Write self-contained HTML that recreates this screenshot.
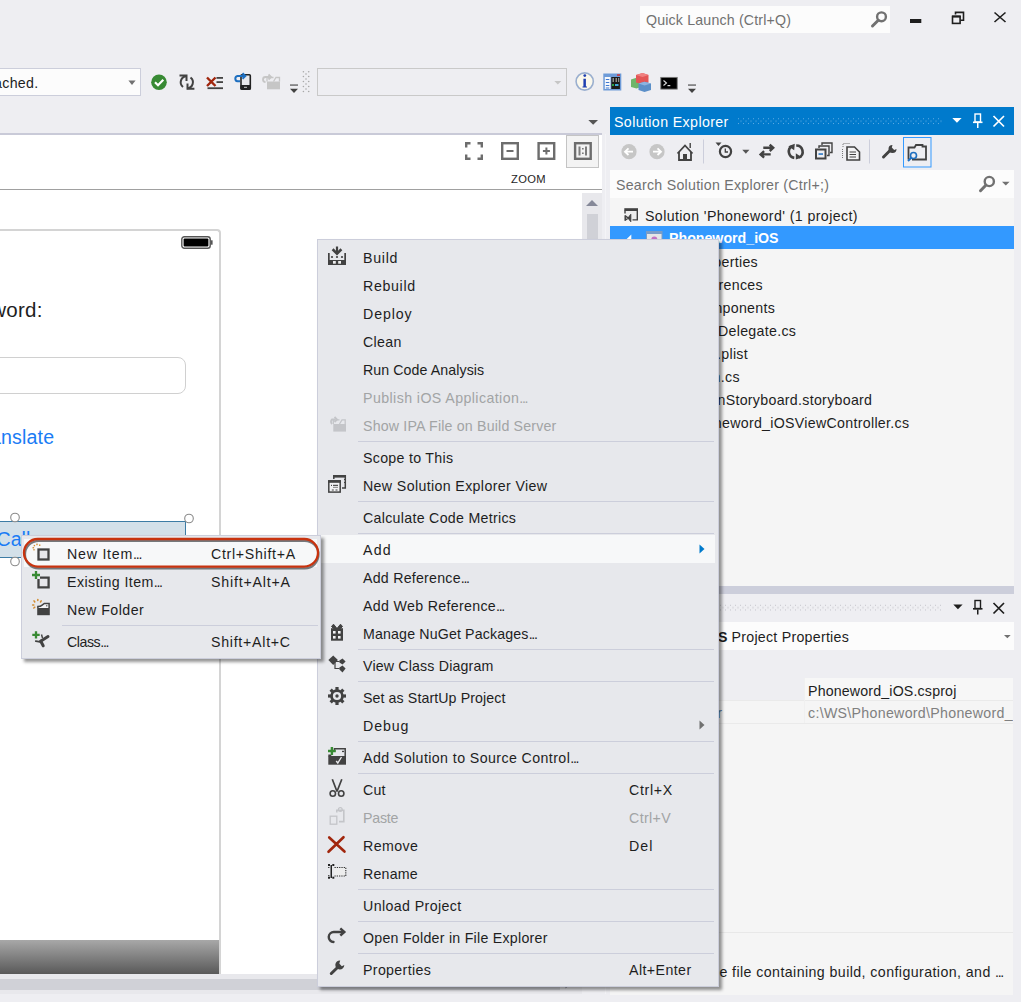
<!DOCTYPE html>
<html><head><meta charset="utf-8">
<style>
*{box-sizing:border-box}
html,body{margin:0;padding:0}
body{width:1021px;height:1002px;position:relative;overflow:hidden;background:#EEEEF2;font-family:"Liberation Sans",sans-serif;font-size:14.2px;color:#1E1E1E}
.a{position:absolute}
.t{position:absolute;white-space:nowrap;line-height:16px}
svg{position:absolute;overflow:visible}
/* menu */
.menu{position:absolute;background:#E7E8EC;border:1px solid #CCCEDB;box-shadow:3px 3px 3px rgba(0,0,0,0.42)}
.mi{position:absolute;left:0;right:0;height:28px}
.mi .l{position:absolute;left:45px;top:7px;line-height:16px;white-space:nowrap}
.mi .k{position:absolute;top:7px;line-height:16px;white-space:nowrap}
.sep{position:absolute;height:1px;background:#CCCEDB}
.dis{color:#A2A4A5}
.hl{position:absolute;left:2px;right:3px;height:28px;background:#F7F8F9}
</style></head><body>

<!-- Quick launch -->
<div class="a" style="left:640px;top:6px;width:250px;height:27px;background:#FCFCFC"></div>
<div class="t" style="left:646px;top:12px;color:#717171;letter-spacing:0.17px">Quick Launch (Ctrl+Q)</div>

<!-- toolbar dropdown 1 -->
<div class="a" style="left:-2px;top:68px;width:143px;height:28px;background:#FCFCFC;border:1px solid #CCCEDB"></div>
<div class="t" style="right:982.5px;top:75px;letter-spacing:0.3px">No devices attached.</div>
<!-- dropdown 2 -->
<div class="a" style="left:317px;top:68px;width:250px;height:28px;background:#EEEEF2;border:1px solid #C9C9C9"></div>

<!-- document well -->
<div class="a" style="left:0;top:135px;width:602px;height:839px;background:#FFFFFF"></div>
<div class="a" style="left:0;top:133px;width:602px;height:2px;background:#C9CAD8"></div>
<div class="a" style="left:0;top:189px;width:602px;height:1px;background:#A0A0A0"></div>
<div class="t" style="left:511px;top:171px;font-size:11.2px;letter-spacing:0.3px">ZOOM</div>

<!-- vertical scrollbar -->
<div class="a" style="left:582px;top:193px;width:20px;height:781px;background:#E8E8EC"></div>
<div class="a" style="left:587px;top:214px;width:11px;height:300px;background:#D0D1D7"></div>
<svg style="left:582px;top:193px" width="20" height="20"><path d="M4 13H16L10 7Z" fill="#868999"/></svg>
<!-- horizontal scrollbar -->
<div class="a" style="left:0;top:974px;width:582px;height:20px;background:#E8E8EC"></div>
<div class="a" style="left:0;top:979px;width:560px;height:11px;background:#D0D1D7"></div>
<svg style="left:560px;top:974px" width="50" height="20"><path d="M5.5 5.5L10.5 10L5.5 14.5Z" fill="#868999"/></svg>

<!-- phone frame -->
<div class="a" style="left:-20px;top:229px;width:241px;height:745px;border:2px solid #D4D4D4;border-bottom:none;border-radius:4px 4px 0 0;background:#fff"></div>
<div class="t" style="right:978.2px;top:298px;font-size:20.5px;line-height:24px;letter-spacing:0.3px">Enter a Phoneword:</div>
<div class="a" style="left:-20px;top:357px;width:206px;height:37px;border:1.5px solid #D0D0D0;border-radius:8px"></div>
<div class="t" style="right:966.8px;top:426px;font-size:19.6px;line-height:22px;color:#1A7CF5;letter-spacing:0.15px">Translate</div>
<div class="a" style="left:-10px;top:521px;width:196px;height:37px;background:#D3E0E9;border:1px solid #3D7CA5"></div>
<div class="t" style="left:-3.5px;top:528px;font-size:19.6px;line-height:22px;color:#1A7CF5">Call</div>
<div class="a" style="left:0;top:940px;width:219px;height:34px;background:linear-gradient(#A8A8A8,#595959)"></div>

<!-- Solution Explorer -->
<div class="a" style="left:610px;top:107px;width:404px;height:28px;background:#007ACC"></div>
<div class="t" style="left:614px;top:114px;color:#fff;letter-spacing:0.394px">Solution Explorer</div>
<div class="a" style="left:610px;top:170px;width:404px;height:28px;background:#FCFCFC"></div>
<div class="t" style="left:616px;top:177px;color:#717171;letter-spacing:0.259px">Search Solution Explorer (Ctrl+;)</div>
<div class="a" style="left:610px;top:198px;width:404px;height:388px;background:#F5F5F5"></div>
<div class="a" style="left:610px;top:226px;width:404px;height:23px;background:#3399FF"></div>
<div class="t" style="left:645px;top:208px;letter-spacing:0.397px">Solution 'Phoneword' (1 project)</div>
<div class="t" style="left:669px;top:230px;color:#fff;font-weight:bold">Phoneword_iOS</div>
<div class="t" style="right:263.0px;top:254px;letter-spacing:0.3px">Properties</div>
<div class="t" style="right:258.1px;top:277px;letter-spacing:0.3px">References</div>
<div class="t" style="right:245.9px;top:300px;letter-spacing:0.3px">Components</div>
<div class="t" style="right:224.8px;top:323px;letter-spacing:0.3px">AppDelegate.cs</div>
<div class="t" style="right:273.0px;top:346px;letter-spacing:0.3px">Info.plist</div>
<div class="t" style="right:281.2px;top:369px;letter-spacing:0.3px">Main.cs</div>
<div class="t" style="right:148.7px;top:392px;letter-spacing:0.3px">MainStoryboard.storyboard</div>
<div class="t" style="right:111.7px;top:415px;letter-spacing:0.3px">Phoneword_iOSViewController.cs</div>

<!-- splitter -->
<div class="a" style="left:610px;top:586px;width:404px;height:8px;background:#CCCEDB"></div>

<!-- Properties panel -->
<div class="a" style="left:610px;top:622px;width:404px;height:28px;background:#FCFCFC"></div>
<div class="t" style="right:172px;top:629px;letter-spacing:0.259px"><b style="letter-spacing:0">Phoneword_iOS</b> Project Properties</div>
<div class="a" style="left:610px;top:678px;width:404px;height:22px;background:#EEEEF2"></div>
<div class="a" style="left:805px;top:678px;width:208px;height:22px;background:#F7F7F7"></div>
<div class="a" style="left:610px;top:700px;width:403px;height:295px;background:#F5F5F5"></div>
<div class="a" style="left:610px;top:700px;width:403px;height:1px;background:#EAEAEA"></div>
<div class="a" style="left:605px;top:134px;width:1px;height:860px;background:#F4F4F7"></div>
<div class="a" style="left:610px;top:723px;width:403px;height:1px;background:#EAEAEA"></div>
<div class="a" style="left:804px;top:678px;width:1px;height:45px;background:#F0F0F0"></div>
<div class="t" style="left:808px;top:683px;letter-spacing:0.168px">Phoneword_iOS.csproj</div>
<div class="a" style="left:805px;top:700px;width:208px;height:23px;overflow:hidden"><div class="t" style="left:3px;top:5px;color:#808080;letter-spacing:0.3px">c:\WS\Phoneword\Phoneword_iOS</div></div>
<div class="t" style="right:299px;top:705px;color:#5A7FA8">Project Folder</div>
<div class="a" style="left:610px;top:932px;width:403px;height:1px;background:#E8E8E8"></div>
<div class="t" style="right:18px;top:964px;letter-spacing:0.42px">The name of the file containing build, configuration, and <span style="letter-spacing:-1.3px">...</span></div>

<!-- main context menu -->
<!-- storyboard handles -->
<svg style="left:0;top:0" width="230" height="600">
<circle cx="15" cy="517.5" r="4.3" fill="#fff" stroke="#8A8A8A" stroke-width="1.1"/>
<circle cx="189" cy="518.5" r="4.3" fill="#fff" stroke="#8A8A8A" stroke-width="1.1"/>
<circle cx="15" cy="561.5" r="4.3" fill="#fff" stroke="#8A8A8A" stroke-width="1.1"/>
</svg>
<!-- battery -->
<svg style="left:180px;top:235px" width="36" height="16">
<rect x="1.8" y="1.8" width="28.4" height="11.4" rx="2.5" fill="none" stroke="#555" stroke-width="1.4"/>
<rect x="3.6" y="3.6" width="24.8" height="7.8" rx="1" fill="#000"/>
<rect x="30.6" y="5.3" width="2" height="4.4" fill="#555"/>
</svg>

<!-- title bar icons -->
<svg style="left:860px;top:0" width="161" height="40">
<circle cx="21.5" cy="16.8" r="4.4" fill="none" stroke="#717171" stroke-width="2.4"/>
<path d="M18.3 20.3L12.5 26" stroke="#717171" stroke-width="3" stroke-linecap="round"/>
<rect x="50" y="19" width="11.3" height="4" fill="#1E1E1E"/>
<path d="M95.5 14.5V12.4H103.5V20.3H100.5" stroke="#1E1E1E" stroke-width="1.6" fill="none"/>
<rect x="92.5" y="16.4" width="7.6" height="7" fill="none" stroke="#1E1E1E" stroke-width="1.6"/>
<rect x="92" y="15.5" width="8.6" height="2" fill="#1E1E1E"/>
<path d="M134.5 12.5L145.5 22M145.5 12.5L134.5 22" stroke="#1E1E1E" stroke-width="1.6"/>
</svg>

<!-- toolbar icons -->
<svg style="left:0;top:60px" width="720" height="45">
<path d="M128.4 20.5H135.6L132 25Z" fill="#717171"/>
<circle cx="159" cy="22.3" r="7.8" fill="#388A34"/>
<path d="M155 22.3L158 25.2L163.3 19.8" stroke="#fff" stroke-width="2.2" fill="none"/>
<path d="M186.5 16.3A6 6 0 0 0 183 27" stroke="#424242" stroke-width="2" fill="none"/>
<path d="M179.5 15.5H186.5V21" stroke="#424242" stroke-width="2" fill="none"/>
<path d="M187 28.3A6 6 0 0 0 190.5 17.5" stroke="#424242" stroke-width="2" fill="none"/>
<path d="M194.4 28.8H187.5V23.5" stroke="#424242" stroke-width="2" fill="none"/>
<path d="M207 17.5L215.5 26M215.5 17.5L207 26" stroke="#A1260D" stroke-width="2.4"/>
<rect x="216.5" y="17" width="6.5" height="1.8" fill="#424242"/><rect x="216.5" y="21.2" width="6.5" height="1.8" fill="#424242"/>
<rect x="207.5" y="27.3" width="15.5" height="1.8" fill="#424242"/>
<rect x="241" y="14.8" width="9.3" height="14.4" rx="1" fill="#E9E9EC" stroke="#222" stroke-width="1.6"/>
<rect x="240.3" y="25" width="10.6" height="4.8" rx="1" fill="#222"/><rect x="244" y="26.8" width="3" height="1" fill="#ccc"/>
<path d="M240 21.3H237.5A2.7 2.7 0 0 1 237.5 16H244" stroke="#1E6FC0" stroke-width="2" fill="none"/>
<path d="M242.5 13.3L245.3 16L242.5 18.7" stroke="#1E6FC0" stroke-width="2" fill="none"/>
<rect x="267" y="21.5" width="13" height="7.8" fill="#C6C6C6"/>
<path d="M267 21.5V17.5H273.5M273.5 21.5L276 17.5H279.5V21.5" stroke="#C6C6C6" stroke-width="1.3" fill="none"/>
<path d="M269.5 17H265.5A2.5 2.5 0 0 0 265.5 22" stroke="#C6C6C6" stroke-width="1.8" fill="none"/>
<path d="M268.5 14.5L271 17L268.5 19.5" stroke="#C6C6C6" stroke-width="1.8" fill="none"/>
<rect x="290" y="24.5" width="8" height="1.1" fill="#424242"/><path d="M290 28.8H298L294 33Z" fill="#424242"/>
<g fill="#A8A8A8"><circle cx="303.4" cy="11.7" r="0.8"/><circle cx="308.7" cy="11.7" r="0.8"/><circle cx="306" cy="14" r="0.8"/>
<circle cx="303.4" cy="16.5" r="0.8"/><circle cx="308.7" cy="16.5" r="0.8"/><circle cx="306" cy="19" r="0.8"/>
<circle cx="303.4" cy="21.5" r="0.8"/><circle cx="308.7" cy="21.5" r="0.8"/><circle cx="306" cy="24" r="0.8"/>
<circle cx="303.4" cy="26.5" r="0.8"/><circle cx="308.7" cy="26.5" r="0.8"/><circle cx="306" cy="29" r="0.8"/>
<circle cx="303.4" cy="31.5" r="0.8"/><circle cx="308.7" cy="31.5" r="0.8"/></g>
<path d="M554.3 21H561.3L557.8 24.5Z" fill="#C6C6C6"/>
<circle cx="584.7" cy="21.5" r="8.6" fill="#FBF8EC" stroke="#9AAFCF" stroke-width="1.6"/>
<circle cx="584.8" cy="15.6" r="1.4" fill="#1F3FB0"/><path d="M583.4 18.8H585.9V26.5H587V27.5H582.5V26.5H583.4Z" fill="#1F3FB0"/>
<rect x="603.3" y="13.5" width="18" height="17" fill="#6E9BD8"/>
<rect x="604.8" y="17" width="5.7" height="12" fill="#F6F8FC"/>
<rect x="611.3" y="17" width="8.6" height="12" fill="#1A1A1A"/>
<g fill="#3F78D0"><rect x="605.8" y="19" width="3.5" height="1"/><rect x="605.8" y="22" width="3.5" height="1"/><rect x="605.8" y="25" width="3.5" height="1"/><rect x="605.8" y="27.5" width="3.5" height="1"/></g>
<g fill="#8c8c8c"><rect x="612.5" y="18" width="1.5" height="4"/><rect x="615.5" y="18" width="1.5" height="4"/><rect x="618" y="18" width="1.2" height="4"/></g>
<rect x="612" y="24" width="2" height="2" fill="#2aa040"/><rect x="615" y="24" width="3.5" height="2" fill="#40a8d8"/>
<rect x="617" y="14.3" width="3" height="1.5" fill="#d03030"/>
<path d="M631 19.5L636.5 17.8L641 19.5V27L636.5 28.5L631 27Z" fill="#6FB56A"/>
<path d="M636 15L642.5 13L648.5 15V22.5L642.5 24.5L636 22.5Z" fill="#E35656"/>
<path d="M636 15L642.5 13L648.5 15L642.5 17Z" fill="#F08080"/>
<path d="M638.5 23.5L644.5 21.7L651 23.5V30L644.5 32L638.5 30Z" fill="#5B8FC8"/>
<path d="M638.5 23.5L644.5 21.7L651 23.5L644.5 25.5Z" fill="#8DB3E0"/>
<rect x="660.8" y="17.4" width="16.4" height="11.7" fill="#000" stroke="#777" stroke-width="0.9"/>
<path d="M663.5 20.5L666.5 23L663.5 25.5" stroke="#ddd" stroke-width="1.1" fill="none"/><rect x="667.5" y="25" width="2.8" height="1.2" fill="#ddd"/>
<rect x="688" y="24.5" width="8" height="1.1" fill="#424242"/><path d="M688 28.8H696L692 33Z" fill="#424242"/>
<path d="M588.3 60H598L593.15 64.7Z" fill="#555"/>
</svg>

<!-- zoom buttons -->
<div class="a" style="left:566px;top:135px;width:33px;height:33px;border:1px solid #C4C4C4;background:#F3F3F3"></div>
<svg style="left:460px;top:135px" width="140" height="30">
<g stroke="#6D6D6D" stroke-width="2.4" fill="none">
<path d="M6.2 12.5V8.2H10.5M17.5 8.2H21.8V12.5M21.8 19.5V23.8H17.5M10.5 23.8H6.2V19.5"/>
<rect x="42.2" y="8.2" width="15.6" height="15.6"/>
<rect x="78.6" y="8.2" width="15.6" height="15.6"/>
<rect x="115.1" y="8.2" width="15.6" height="15.6"/>
</g>
<rect x="46.5" y="15" width="7" height="2" fill="#6D6D6D"/>
<rect x="82.9" y="15" width="7" height="2" fill="#6D6D6D"/><rect x="85.4" y="12.5" width="2" height="7" fill="#6D6D6D"/>
<rect x="118.5" y="11.5" width="2" height="9" fill="#7D7D7D"/><rect x="125" y="11.5" width="2" height="9" fill="#7D7D7D"/>
<rect x="122.1" y="13" width="1.5" height="1.5" fill="#6D6D6D"/><rect x="122.1" y="17.5" width="1.5" height="1.5" fill="#6D6D6D"/>
</svg>

<!-- SE title icons -->
<svg style="left:610px;top:107px" width="404" height="28">
<defs><pattern id="dotsW" x="128" y="11.2" width="5" height="5" patternUnits="userSpaceOnUse"><rect x="0" y="0" width="1" height="1" fill="#6FB3E6"/><rect x="2.5" y="2.5" width="1" height="1" fill="#6FB3E6"/></pattern></defs>
<rect x="128" y="11.2" width="205" height="6" fill="url(#dotsW)"/>
<path d="M342.3 11H351.6L346.95 15.8Z" fill="#fff"/>
<rect x="365" y="7" width="5.5" height="8" fill="none" stroke="#fff" stroke-width="1.4"/>
<rect x="363" y="14.5" width="9.5" height="1.6" fill="#fff"/><rect x="367" y="16" width="1.5" height="5" fill="#fff"/>
<path d="M383.5 9L394 19.5M394 9L383.5 19.5" stroke="#fff" stroke-width="1.7"/>
</svg>
<!-- SE toolbar -->
<svg style="left:610px;top:135px" width="404" height="35">
<circle cx="19" cy="16.7" r="7.6" fill="#C6C6C6"/><path d="M23 16.7H15.5M18.5 13.4L15 16.7L18.5 20" stroke="#fff" stroke-width="1.8" fill="none"/>
<circle cx="47" cy="16.7" r="7.6" fill="#C6C6C6"/><path d="M43 16.7H50.5M47.5 13.4L51 16.7L47.5 20" stroke="#fff" stroke-width="1.8" fill="none"/>
<path d="M67.5 18.5L75 10.5L82.5 18.5" stroke="#424242" stroke-width="1.8" fill="none"/>
<path d="M69 17V25H81V17" stroke="#424242" stroke-width="1.8" fill="none"/>
<rect x="73" y="19" width="4" height="6" fill="#424242"/><rect x="79.5" y="8" width="1.4" height="5" fill="#424242"/>
<rect x="93" y="4.5" width="1" height="24" fill="#CCCEDB"/>
<path d="M105.5 7.5H111.5L108.5 11Z" fill="#424242"/>
<circle cx="115.5" cy="16.5" r="5.6" fill="none" stroke="#424242" stroke-width="2.2"/>
<path d="M115.3 13.5V17H118" stroke="#424242" stroke-width="1.3" fill="none"/>
<path d="M132.3 14.7H139.4L135.85 18.8Z" fill="#555"/>
<path d="M153.3 12.8H163.3M159.7 9.6L163.2 12.8L159.7 16M160.7 19.4H150.3M154.1 16.2L150.6 19.4L154.1 22.6" stroke="#424242" stroke-width="2.4" fill="none"/>
<path d="M184.3 22.9A6.3 6.3 0 0 1 182 11.2" stroke="#424242" stroke-width="2.6" fill="none"/>
<path d="M178.3 11.3L184.8 8.8L184.2 15.2Z" fill="#424242"/>
<path d="M186.2 10.5A6.3 6.3 0 0 1 189 22.5" stroke="#424242" stroke-width="2.6" fill="none"/>
<path d="M192 22.6L185.8 18.2L185.8 24.5Z" fill="#424242"/>
<rect x="206" y="14.5" width="9.5" height="9" fill="none" stroke="#424242" stroke-width="2"/>
<path d="M209 13V11H219V20.5H217M212 10V8H222V17.5H220" stroke="#424242" stroke-width="1.4" fill="none"/>
<rect x="208.5" y="18.3" width="4.5" height="1.5" fill="#1E6FC0"/>
<path d="M233 12V8.5H240M232.5 14V24" stroke="#777" stroke-width="1" stroke-dasharray="1 1" fill="none"/>
<path d="M237 12H244.5L249.5 17V25H237Z" fill="#F3F3F5" stroke="#424242" stroke-width="1.6"/>
<path d="M239.5 17H246M239.5 19.5H246M239.5 22H246" stroke="#424242" stroke-width="1"/>
<rect x="259" y="4.5" width="1" height="24" fill="#CCCEDB"/>
<path d="M273.5 22L280.5 15" stroke="#424242" stroke-width="3" stroke-linecap="round"/>
<path d="M282.5 10A4 4 0 1 0 286.5 14L284.2 15L281.8 12.4Z" fill="#424242"/>
<rect x="293.5" y="2.5" width="27.5" height="29.5" fill="none" stroke="#3399FF" stroke-width="1"/>
<path d="M298.5 24.5V12.5H304.5L306 10H312.5V11.5H316V24.5H302" stroke="#424242" stroke-width="1.8" fill="none"/>
<circle cx="303.5" cy="20.5" r="3" fill="none" stroke="#1E6FC0" stroke-width="1.6"/>
<path d="M301.3 22.8L298 26" stroke="#1E6FC0" stroke-width="2"/>
</svg>
<!-- SE search -->
<svg style="left:970px;top:170px" width="44" height="28">
<rect x="28" y="0" width="16" height="28" fill="#FCFCFC"/>
<circle cx="19.3" cy="11.5" r="4.6" fill="none" stroke="#717171" stroke-width="2.4"/>
<path d="M15.8 15.2L10.5 20.7" stroke="#717171" stroke-width="3" stroke-linecap="round"/>
<path d="M32 11.7H39.6L35.8 15.5Z" fill="#717171"/>
</svg>
<!-- tree icons -->
<svg style="left:615px;top:200px" width="60" height="40">
<rect x="10" y="10" width="12.3" height="9.9" fill="#EDEDED"/>
<path d="M10 13.5V10.5M17.5 19.9H22.3V10.5" stroke="#424242" stroke-width="1.4" fill="none"/>
<rect x="9.3" y="8.2" width="13.7" height="2.8" fill="#424242"/>
<path d="M10.2 15.8L13.3 18L10.2 20.2Z" fill="none" stroke="#424242" stroke-width="1.5" stroke-linejoin="round"/>
<path d="M13 18L15.8 14.3V21.7Z" fill="#424242" stroke="#424242" stroke-width="1" stroke-linejoin="round"/>
<path d="M16.3 34.5L11.7 39H16.3Z" fill="#fff"/>
<rect x="31.5" y="31.5" width="15.5" height="12" fill="#E6E6E6" stroke="#7A9CC6" stroke-width="1"/>
<rect x="31.5" y="31.5" width="15.5" height="2.5" fill="#7A9CC6"/>
<circle cx="39.3" cy="39.5" r="3" fill="#C372C3"/>
</svg>
<!-- properties title -->
<svg style="left:610px;top:594px" width="404" height="28">
<defs><pattern id="dotsG" x="0" y="10.6" width="5" height="5" patternUnits="userSpaceOnUse"><rect x="0" y="0" width="1" height="1" fill="#B8B8C0"/><rect x="2.5" y="2.5" width="1" height="1" fill="#B8B8C0"/></pattern></defs>
<rect x="100" y="10.6" width="231" height="6" fill="url(#dotsG)"/>
<path d="M343.3 10.5H352.6L347.95 15.3Z" fill="#1E1E1E"/>
<rect x="365" y="6.5" width="5.5" height="8" fill="none" stroke="#1E1E1E" stroke-width="1.4"/>
<rect x="363" y="14" width="9.5" height="1.6" fill="#1E1E1E"/><rect x="367" y="15.5" width="1.5" height="5" fill="#1E1E1E"/>
<path d="M383.5 9L394 19.5M394 9L383.5 19.5" stroke="#1E1E1E" stroke-width="1.7"/>
<path d="M394 41H400.7L397.35 44.2Z" fill="#717171"/>
</svg>

<div class="menu" style="left:317px;top:239px;width:402px;height:748px">
<div class="mi" style="top:3px"><svg style="left:0;top:0" width="45" height="28">
<path d="M19 3.5V10.5" stroke="#424242" stroke-width="2.2"/>
<path d="M14.6 6.3L19 10.6L23.4 6.3" stroke="#424242" stroke-width="2.6" fill="none" stroke-linejoin="miter"/>
<rect x="10" y="10" width="1.7" height="12" fill="#424242"/><rect x="26.3" y="10" width="1.7" height="12" fill="#424242"/>
<rect x="10" y="17" width="18" height="5" fill="#424242"/>
<rect x="15" y="18" width="2.8" height="2.7" fill="#F0F0F0"/><rect x="20.2" y="18" width="2.8" height="2.7" fill="#F0F0F0"/>
<circle cx="14" cy="14" r="1.1" fill="#424242"/><circle cx="19" cy="14" r="1.1" fill="#424242"/><circle cx="24" cy="14" r="1.1" fill="#424242"/>
</svg><span class="l"><span style="letter-spacing:0.725px">Build</span></span></div>
<div class="mi" style="top:31px"><span class="l"><span style="letter-spacing:0.667px">Rebuild</span></span></div>
<div class="mi" style="top:59px"><span class="l"><span style="letter-spacing:0.88px">Deploy</span></span></div>
<div class="mi" style="top:87px"><span class="l"><span style="letter-spacing:0.35px">Clean</span></span></div>
<div class="mi" style="top:115px"><span class="l"><span style="letter-spacing:0.081px">Run Code Analysis</span></span></div>
<div class="mi dis" style="top:143px"><span class="l"><span style="letter-spacing:0.418px">Publish iOS Application<span style="letter-spacing:-1.3px">...</span></span></span></div>
<div class="mi dis" style="top:171px"><svg style="left:0;top:0" width="45" height="28">
<rect x="15.3" y="13" width="12.7" height="7.6" fill="#C4C5C9"/>
<path d="M15.3 13V8.8H21.5M21.5 13L24 8.8H27.2V13" stroke="#C4C5C9" stroke-width="1.3" fill="none"/>
<path d="M17 8.5H14A3 3 0 0 0 14 13" stroke="#C4C5C9" stroke-width="1.8" fill="none"/>
<path d="M16.5 6L19 8.5L16.5 11" stroke="#C4C5C9" stroke-width="1.8" fill="none"/>
</svg><span class="l"><span style="letter-spacing:0.182px">Show IPA File on Build Server</span></span></div>
<div class="sep" style="left:40px;top:201px;width:356px"></div>
<div class="mi" style="top:203px"><span class="l"><span style="letter-spacing:0.292px">Scope to This</span></span></div>
<div class="mi" style="top:231px"><svg style="left:0;top:0" width="45" height="28">
<path d="M15.8 8V4.8H27.3V17H24" stroke="#424242" stroke-width="1.5" fill="none"/><rect x="15.2" y="4.2" width="12.8" height="2.4" fill="#424242"/>
<rect x="26" y="8" width="1" height="1" fill="#424242"/><rect x="26" y="11" width="1" height="1" fill="#424242"/>
<rect x="10.8" y="9.9" width="11.4" height="11.2" stroke="#424242" stroke-width="1.5" fill="#F2F2F4"/><rect x="10.1" y="9.2" width="12.8" height="2.6" fill="#424242"/>
<rect x="13" y="13.8" width="1" height="1.2" fill="#424242"/><rect x="15" y="13.8" width="5" height="1.1" fill="#424242"/><rect x="15" y="15.8" width="5" height="1.1" fill="#8a8a8a"/>
<rect x="13.8" y="18.5" width="2" height="1" fill="#424242"/><rect x="17.5" y="18.5" width="2" height="1" fill="#424242"/>
</svg><span class="l"><span style="letter-spacing:0.368px">New Solution Explorer View</span></span></div>
<div class="sep" style="left:40px;top:261px;width:356px"></div>
<div class="mi" style="top:263px"><span class="l"><span style="letter-spacing:0.3px">Calculate Code Metrics</span></span></div>
<div class="sep" style="left:40px;top:293px;width:356px"></div>
<div class="hl" style="top:295px"></div>
<div class="mi" style="top:295px"><span class="l"><span style="letter-spacing:1.25px">Add</span></span><svg style="left:381px;top:9px" width="6" height="10"><path d="M0.5 0.5L5.5 5L0.5 9.5Z" fill="#007ACC"/></svg></div>
<div class="mi" style="top:323px"><span class="l"><span style="letter-spacing:0.242px">Add Reference<span style="letter-spacing:-1.3px">...</span></span></span></div>
<div class="mi" style="top:351px"><span class="l"><span style="letter-spacing:0.325px">Add Web Reference<span style="letter-spacing:-1.3px">...</span></span></span></div>
<div class="mi" style="top:379px"><svg style="left:0;top:0" width="45" height="28">
<rect x="13" y="9.2" width="12" height="12.5" fill="#424242"/>
<rect x="15" y="12" width="2.6" height="2.6" fill="#F4F4F6"/><rect x="20" y="12" width="2.6" height="2.6" fill="#F4F4F6"/>
<rect x="15" y="17" width="2.6" height="2.6" fill="#F4F4F6"/><rect x="20" y="17" width="2.6" height="2.6" fill="#F4F4F6"/>
<path d="M19 9.5L15.5 5.2L13.5 7.5L15.5 9.5Z M19 9.5L22.5 5.2L24.5 7.5L22.5 9.5Z" fill="#424242" stroke="#424242" stroke-width="1"/>
</svg><span class="l"><span style="letter-spacing:0.15px">Manage NuGet Packages<span style="letter-spacing:-1.3px">...</span></span></span></div>
<div class="sep" style="left:40px;top:409px;width:356px"></div>
<div class="mi" style="top:411px"><svg style="left:0;top:0" width="45" height="28">
<path d="M15.2 4.4L19.9 9.1L15.2 13.9L10.4 9.1Z" fill="#424242"/>
<path d="M17 10.5H21.5M17 10.5V17.5H21.5" stroke="#424242" stroke-width="1.2" fill="none"/>
<path d="M21.4 9.5L24.5 7.5L27.6 10.5L24.5 13.4L21.4 11.4Z" fill="#424242"/>
<path d="M21.4 16.4L24.5 14.5L27.6 17.5L24.5 21.5L21.4 18.5Z" fill="#424242"/>
</svg><span class="l"><span style="letter-spacing:0.171px">View Class Diagram</span></span></div>
<div class="sep" style="left:40px;top:441px;width:356px"></div>
<div class="mi" style="top:443px"><svg style="left:0;top:0" width="45" height="28">
<g transform="translate(19 13)">
<circle r="6.8" fill="#424242"/>
<g fill="#424242"><rect x="-1.6" y="-9" width="3.2" height="18"/><rect x="-9" y="-1.6" width="18" height="3.2"/>
<rect x="-1.6" y="-9" width="3.2" height="18" transform="rotate(45)"/><rect x="-9" y="-1.6" width="18" height="3.2" transform="rotate(45)"/></g>
<circle r="4.1" fill="#E7E8EC"/><circle r="1.7" fill="#424242"/>
</g>
</svg><span class="l"><span style="letter-spacing:0.095px">Set as StartUp Project</span></span></div>
<div class="mi" style="top:471px"><span class="l"><span style="letter-spacing:0.9px">Debug</span></span><svg style="left:381px;top:9px" width="6" height="10"><path d="M0.5 0.5L5.5 5L0.5 9.5Z" fill="#717171"/></svg></div>
<div class="sep" style="left:40px;top:501px;width:356px"></div>
<div class="mi" style="top:503px"><svg style="left:0;top:0" width="45" height="28">
<path d="M16.5 8.5V5.8H27.2V13" stroke="#424242" stroke-width="1.5" fill="none"/>
<rect x="24" y="7.8" width="2" height="1.3" fill="#424242"/>
<rect x="10.3" y="13" width="17.7" height="8.7" fill="#424242"/>
<rect x="10.3" y="11.5" width="3" height="2" fill="#424242"/>
<path d="M18.2 18L19.8 20L23.5 14" stroke="#E9E9EC" stroke-width="1.4" fill="none"/>
<path d="M13.9 4V11.9M10 7.95H17.8" stroke="#388A34" stroke-width="2.4"/>
</svg><span class="l"><span style="letter-spacing:0.414px">Add Solution to Source Control<span style="letter-spacing:-1.3px">...</span></span></span></div>
<div class="sep" style="left:40px;top:533px;width:356px"></div>
<div class="mi" style="top:535px"><svg style="left:0;top:0" width="45" height="28">
<path d="M14.3 4.3L19 16.5M23.8 4.3L19 16.5" stroke="#424242" stroke-width="1.7" fill="none"/>
<circle cx="14.8" cy="18.5" r="2.7" stroke="#424242" stroke-width="1.6" fill="none"/>
<circle cx="23.2" cy="18.5" r="2.7" stroke="#424242" stroke-width="1.6" fill="none"/>
</svg><span class="l"><span style="letter-spacing:0.15px">Cut</span></span><span class="k" style="left:311px"><span style="letter-spacing:0.7px">Ctrl+X</span></span></div>
<div class="mi dis" style="top:563px"><svg style="left:0;top:0" width="45" height="28">
<path d="M18.8 9.5V7.3H25.8V18.6H21" stroke="#C4C5C9" stroke-width="1.6" fill="none"/>
<circle cx="22.3" cy="6.6" r="1.9" stroke="#C4C5C9" stroke-width="1.2" fill="none"/>
<rect x="12.2" y="13.2" width="6.6" height="8" stroke="#C4C5C9" stroke-width="1.3" fill="none"/>
</svg><span class="l"><span style="letter-spacing:-0.225px">Paste</span></span><span class="k" style="left:311px"><span style="letter-spacing:0.38px">Ctrl+V</span></span></div>
<div class="mi" style="top:591px"><svg style="left:0;top:0" width="45" height="28">
<path d="M10.5 20.8L25.5 6.2M11.2 6.5L26.5 20.5" stroke="#A1260D" stroke-width="2.6" stroke-linecap="round" fill="none"/>
</svg><span class="l"><span style="letter-spacing:0.42px">Remove</span></span><span class="k" style="left:311px"><span style="letter-spacing:1.0px">Del</span></span></div>
<div class="mi" style="top:619px"><svg style="left:0;top:0" width="45" height="28">
<rect x="12.5" y="6" width="1.5" height="13" fill="#222"/>
<rect x="10" y="5" width="2" height="2" fill="#222"/><rect x="14.3" y="5" width="2" height="2" fill="#222"/>
<rect x="10" y="17.7" width="2" height="2" fill="#222"/><rect x="14.3" y="17.7" width="2" height="2" fill="#222"/>
<rect x="16" y="8.5" width="11.5" height="8.5" fill="#EDEDED"/><path d="M16.5 8.5H27.8V17H16.5" stroke="#333" stroke-width="1.1" stroke-dasharray="1.3 1" fill="none"/>
<path d="M10 8.5H11.5M10 16.6H11.5" stroke="#444" stroke-width="1" fill="none"/>
</svg><span class="l"><span style="letter-spacing:0.22px">Rename</span></span></div>
<div class="sep" style="left:40px;top:649px;width:356px"></div>
<div class="mi" style="top:651px"><span class="l"><span style="letter-spacing:0.4px">Unload Project</span></span></div>
<div class="sep" style="left:40px;top:681px;width:356px"></div>
<div class="mi" style="top:683px"><svg style="left:0;top:0" width="45" height="28">
<path d="M26 9H16A5 5 0 0 0 15.5 19" stroke="#424242" stroke-width="2.4" fill="none" stroke-linecap="round"/>
<path d="M22.3 5.4L26.3 9L22.3 12.5" stroke="#424242" stroke-width="2.4" fill="none" stroke-linejoin="miter"/>
</svg><span class="l"><span style="letter-spacing:0.259px">Open Folder in File Explorer</span></span></div>
<div class="sep" style="left:40px;top:713px;width:356px"></div>
<div class="mi" style="top:715px"><svg style="left:0;top:0" width="45" height="28">
<path d="M13.3 18.5L19.5 12.5" stroke="#424242" stroke-width="3" stroke-linecap="round"/>
<path d="M22.2 5.5A4.5 4.5 0 1 0 26.3 10L23.8 11.2L21.3 8.5Z" fill="#424242"/>
</svg><span class="l"><span style="letter-spacing:0.344px">Properties</span></span><span class="k" style="left:311px"><span style="letter-spacing:0.425px">Alt+Enter</span></span></div>
</div>
<div class="menu" style="left:21px;top:535px;width:300px;height:124px">
<div class="hl" style="top:3px"></div>
<div class="mi" style="top:3px"><svg style="left:0;top:0" width="45" height="28">
<rect x="16.5" y="10.5" width="10" height="10" stroke="#424242" stroke-width="2.3" fill="#E6E6EA"/>
<g fill="#D18B2F"><rect x="14.3" y="4.6" width="1.4" height="1.6"/><rect x="17.0" y="5.5" width="1.4" height="1.4"/><rect x="11.7" y="5.8999999999999995" width="1.4" height="1.4"/><rect x="10.5" y="8.1" width="1.6" height="1.3"/><rect x="11.3" y="10.1" width="1.4" height="1.3"/></g>
</svg><span class="l"><span style="letter-spacing:0.771px">New Item<span style="letter-spacing:-1.3px">...</span></span></span><span class="k" style="left:189px"><span style="letter-spacing:0.7px">Ctrl+Shift+A</span></span></div>
<div class="mi" style="top:31px"><svg style="left:0;top:0" width="45" height="28">
<path d="M18 10.6H26.6V20.4H16.5V12" stroke="#424242" stroke-width="2.3" fill="#E6E6EA"/>
<path d="M14 4V12M10 8H18" stroke="#388A34" stroke-width="2.3"/>
</svg><span class="l"><span style="letter-spacing:0.425px">Existing Item<span style="letter-spacing:-1.3px">...</span></span></span><span class="k" style="left:189px"><span style="letter-spacing:0.8px">Shift+Alt+A</span></span></div>
<div class="mi" style="top:59px"><svg style="left:0;top:0" width="45" height="28">
<rect x="15.2" y="12.6" width="12.6" height="7.6" fill="#424242"/>
<path d="M15.9 13V11.5C17.5 11.5 19 11 20.5 9.8L22.3 8.5H27.1V13" stroke="#424242" stroke-width="1.5" fill="#F4F4F6"/>
<rect x="24.3" y="10" width="1" height="1.5" fill="#424242"/>
<g stroke="#D18B2F" stroke-width="1.5" stroke-linecap="round">
<path d="M12 5.8L12.8 7"/><path d="M15.8 4.4V5.6"/><path d="M19.2 5.8L18.5 7"/><path d="M10.6 10H11.8"/><path d="M11.8 13L12.8 12.2"/>
</g>
</svg><span class="l"><span style="letter-spacing:0.467px">New Folder</span></span></div>
<div class="sep" style="left:40px;top:89px;width:256px"></div>
<div class="mi" style="top:91px"><svg style="left:0;top:0" width="45" height="28">
<path d="M14 4.3V11.6M10.3 7.9H17.7" stroke="#388A34" stroke-width="2.3"/>
<path d="M26 9.5L19 14" stroke="#424242" stroke-width="3" stroke-linecap="round"/>
<path d="M18.8 14.2L21.2 18.8" stroke="#424242" stroke-width="3" stroke-linecap="round"/>
<path d="M13.8 14.2L18 14.8" stroke="#424242" stroke-width="1.8" stroke-linecap="round"/>
<path d="M19.5 7.5L20.5 11" stroke="#424242" stroke-width="1.4"/>
</svg><span class="l"><span style="letter-spacing:-0.45px">Class<span style="letter-spacing:-1.3px">...</span></span></span><span class="k" style="left:189px"><span style="letter-spacing:0.73px">Shift+Alt+C</span></span></div>
<svg style="left:0;top:0" width="300" height="40">
<rect x="3" y="4.8" width="293.5" height="27.6" rx="13.8" stroke="#5F6366" stroke-width="2.2" fill="none" opacity="0.85"/>
<rect x="2" y="3" width="294" height="27.6" rx="13.8" stroke="#C8330F" stroke-width="2.3" fill="none"/>
</svg></div>

</body></html>
